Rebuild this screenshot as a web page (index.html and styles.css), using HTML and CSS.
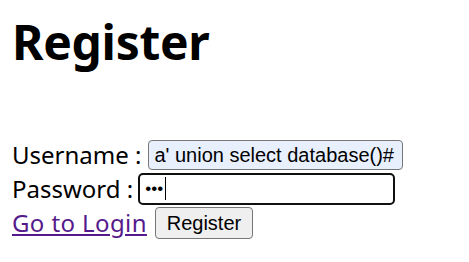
FILE: index.html
```html
<!DOCTYPE html>
<html>
<head>
<meta charset="utf-8">
<link rel="stylesheet" href="styles.css">
</head>
<body>
<h1 class="title">Register</h1>
<form class="form">
  <div class="row row-user">
    <label class="label" for="u">Username :</label>
    <input class="field field-user" id="u" type="text" value="a' union select database()#">
  </div>
  <div class="row row-pass">
    <label class="label" for="p">Password :</label>
    <span class="pass-wrap">
      <input class="field field-pass" id="p" type="password" value="abc">
      <span class="caret"></span>
    </span>
  </div>
  <div class="row row-actions">
    <a class="link" href="#">Go to Login</a>
    <button class="btn" type="button">Register</button>
  </div>
</form>
</body>
</html>
```
FILE: styles.css
```css
html, body { margin: 0; padding: 0; background: #fff; }
body {
  padding: 0 12px;
  font-family: "Noto Sans", "Open Sans", sans-serif;
  font-size: 24px;
  color: #000;
}
.title {
  margin: 0;
  padding-top: 10px;
  height: 128px;
  font-size: 48px;
  font-weight: 700;
  line-height: 64px;
  letter-spacing: -0.3px;
}
.form { display: flex; flex-direction: column; }
.row {
  display: flex;
  align-items: center;
  height: 34px;
}
.row-user { gap: 7px; }
.row-pass { gap: 5px; }
.row-actions { gap: 8px; }
.label { line-height: 34px; }
.field {
  box-sizing: border-box;
  font-family: "Liberation Sans", Arial, sans-serif;
  font-size: 20px;
  color: #000;
  padding: 0 5px;
  margin: 0;
}
.field-user {
  width: 255px;
  height: 30px;
  background: #e8f0fe;
  border: 1px solid #767676;
  border-radius: 4px;
}
.pass-wrap {
  position: relative;
  display: inline-flex;
}
.field-pass {
  width: 257px;
  height: 32px;
  font-size: 17px;
  padding: 0 5px;
  background: #fff;
  border: 2px solid #101010;
  border-radius: 5px;
  outline: none;
}
.caret {
  position: absolute;
  left: 27px;
  top: 4px;
  width: 1px;
  height: 23px;
  background: #000;
}
.link {
  color: #551a8b;
  text-decoration: underline;
  line-height: 34px;
  letter-spacing: 0.4px;
}
.btn {
  box-sizing: border-box;
  width: 98px;
  height: 32px;
  font-family: "Liberation Sans", Arial, sans-serif;
  font-size: 20px;
  color: #000;
  background: #efefef;
  border: 1px solid #767676;
  border-radius: 4px;
  padding: 0;
  margin: 0;
}
```
